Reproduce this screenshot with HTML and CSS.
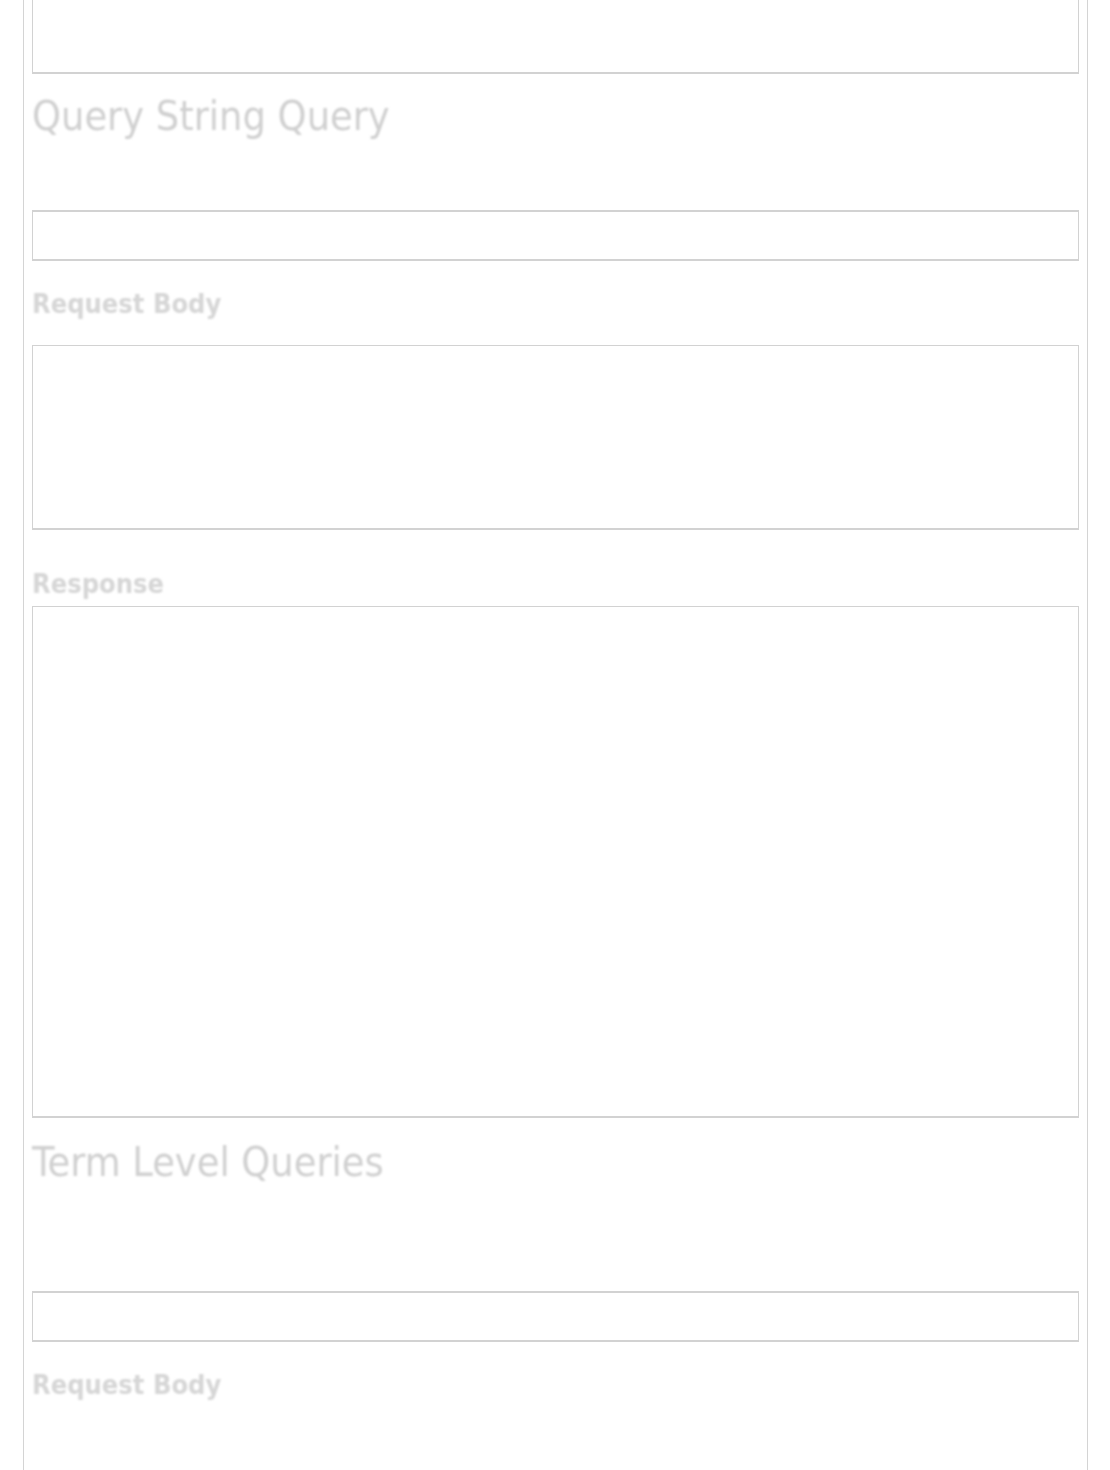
FILE: index.html
```html
<!DOCTYPE html>
<html lang="en">
<head>
<meta charset="utf-8">
<title>Query DSL</title>
<link rel="stylesheet" href="styles.css">
</head>
<body>
<div class="page">
  <div class="box box-top"></div>

  <h2 class="section-title t-query">Query String Query</h2>
  <div class="box box-input in-1"></div>
  <h4 class="label l-req1">Request Body</h4>
  <div class="box box-body"></div>
  <h4 class="label l-resp">Response</h4>
  <div class="box box-response"></div>

  <h2 class="section-title t-term">Term Level Queries</h2>
  <div class="box box-input in-2"></div>
  <h4 class="label l-req2">Request Body</h4>
  <div class="spacer"></div>
</div>
</body>
</html>
```

FILE: styles.css
```css
html, body {
  margin: 0;
  padding: 0;
  background: #ffffff;
  overflow: hidden;
}

body {
  font-family: "DejaVu Sans Condensed", "DejaVu Sans", Verdana, sans-serif;
}

.page {
  margin: 0 0 0 23px;
  width: 1047px;
  padding: 0 8px;
  border-left: 1px solid #d4d4d4;
  border-right: 1px solid #d4d4d4;
  min-height: 1470px;
  box-sizing: content-box;
  display: flow-root;
}

.box {
  border: 1px solid #d2d2d2;
  background: #ffffff;
  box-sizing: border-box;
}

.box-top {
  margin-top: -40px;
  height: 114px;
  border-bottom-width: 2px;
}

.box-input {
  height: 51px;
  border-top-width: 2px;
  border-bottom-width: 2px;
}

.box-body {
  height: 185px;
  border-bottom-width: 2px;
}

.box-response {
  height: 512px;
  border-bottom-width: 2px;
}

.section-title {
  font-weight: normal;
  font-size: 41px;
  line-height: 48px;
  color: #d0d0d0;
  margin: 0;
  filter: blur(1px);
}

.label {
  font-weight: bold;
  font-size: 27px;
  line-height: 32px;
  color: #d6d6d6;
  margin: 0;
  filter: blur(1px);
}

.t-query { margin-top: 18px; margin-bottom: 70px; }
.l-req1 { margin-top: 27px; margin-bottom: 25px; }
.l-resp { margin-top: 38px; margin-bottom: 6px; }
.t-term { margin-top: 20px; margin-bottom: 105px; }
.l-req2 { margin-top: 27px; }

.spacer { height: 80px; }
```
